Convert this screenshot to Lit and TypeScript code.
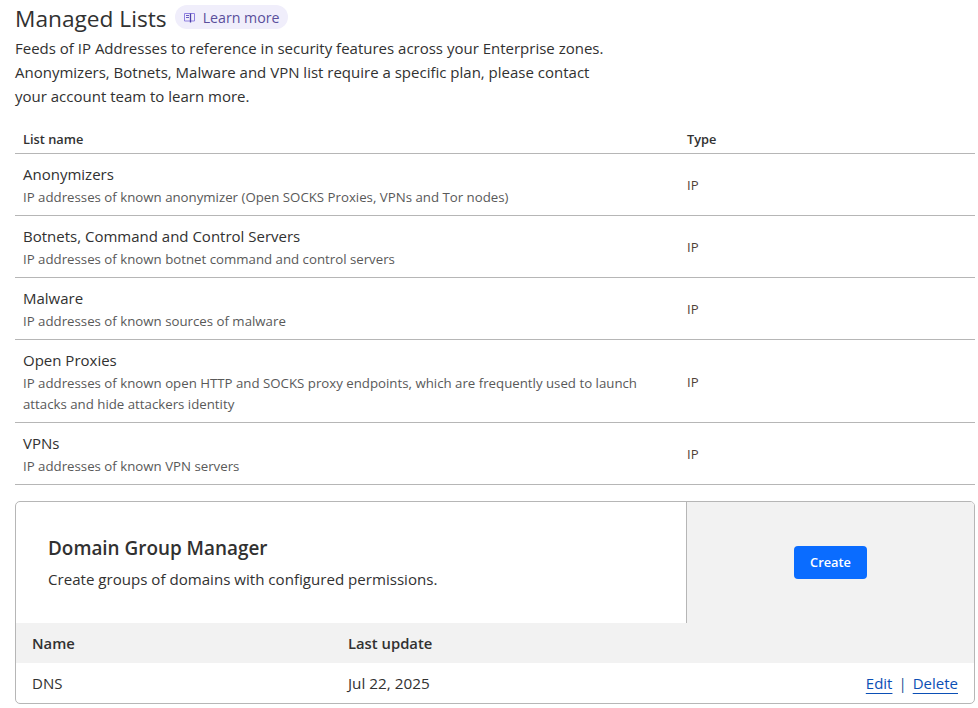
import { css, html, LitElement } from 'lit'
import { customElement } from 'lit/decorators.js'

const rows = [
  { name: 'Anonymizers', desc: 'IP addresses of known anonymizer (Open SOCKS Proxies, VPNs and Tor nodes)' },
  { name: 'Botnets, Command and Control Servers', desc: 'IP addresses of known botnet command and control servers' },
  { name: 'Malware', desc: 'IP addresses of known sources of malware' },
  {
    name: 'Open Proxies',
    desc: 'IP addresses of known open HTTP and SOCKS proxy endpoints, which are frequently used to launch attacks and hide attackers identity',
  },
  { name: 'VPNs', desc: 'IP addresses of known VPN servers' },
]

@customElement('app-root')
export class AppRoot extends LitElement {
  static styles = css`
    :host {
      display: block;
      width: 978px;
      height: 708px;
      overflow: hidden;
      background: #fff;
      color: #313131;
      font-family: 'Open Sans', 'Noto Sans', sans-serif;
      box-sizing: border-box;
      padding: 0 3px 0 15px;
    }
    .title-row {
      display: flex;
      align-items: flex-start;
      gap: 8px;
      height: 36px;
    }
    h1 {
      margin: 0;
      font-size: 22.7px;
      font-weight: 400;
      line-height: 38px;
      color: #313131;
    }
    .learn {
      display: inline-flex;
      align-items: center;
      gap: 8px;
      height: 24px;
      margin-top: 5px;
      padding: 0 8px 0 9px;
      border-radius: 12px;
      background: #f0eefb;
      color: #5a4f9c;
      font-size: 14.2px;
    }
    .intro {
      margin: 0;
      width: 610px;
      font-size: 15px;
      line-height: 24px;
    }
    .head,
    .row {
      display: grid;
      grid-template-columns: 664px 1fr;
      align-items: center;
      padding-left: 8px;
      border-bottom: 1px solid #b6b6b6;
      box-sizing: border-box;
    }
    .head {
      height: 30px;
      margin-top: 16px;
      font-size: 12.8px;
      font-weight: 600;
    }
    .row {
      padding-top: 8px;
      padding-bottom: 7px;
    }
    .name {
      font-size: 15px;
      line-height: 24px;
    }
    .desc {
      margin-top: 1px;
      font-size: 13.25px;
      line-height: 21px;
      color: #595959;
      width: 640px;
    }
    .type {
      font-size: 13.2px;
      color: #4f4238;
    }
    .card {
      margin-top: 16px;
      border: 1px solid #b6b6b6;
      border-radius: 5px;
      overflow: hidden;
    }
    .top {
      display: grid;
      grid-template-columns: 671px 1fr;
      height: 121px;
    }
    .info {
      display: flex;
      flex-direction: column;
      justify-content: center;
      padding: 0 0 2px 32px;
      border-right: 1px solid #b6b6b6;
    }
    h2 {
      margin: 0 0 6px;
      font-size: 18.9px;
      font-weight: 600;
      line-height: 28px;
    }
    .info p {
      margin: 0;
      font-size: 15.1px;
      line-height: 22px;
    }
    .action {
      display: flex;
      align-items: center;
      justify-content: center;
      background: #f2f2f2;
    }
    button {
      width: 73px;
      height: 33px;
      padding: 0 0 2px;
      border: none;
      border-radius: 4px;
      background: #0a6cff;
      color: #fff;
      font: 600 12.8px 'Open Sans', sans-serif;
    }
    .t-head,
    .t-row {
      display: grid;
      grid-template-columns: 316px 1fr auto;
      align-items: center;
      padding: 0 16px;
      font-size: 15px;
    }
    .t-head {
      height: 40px;
      background: #f2f2f2;
      font-size: 14.8px;
      font-weight: 600;
    }
    .t-row {
      height: 40px;
    }
    .date {
      font-size: 15.3px;
    }
    .links {
      display: flex;
      gap: 6px;
      font-size: 15px;
      color: #0b4fb5;
    }
    .links a {
      text-decoration: underline;
      text-underline-offset: 4px;
    }
    .sep {
      color: #1a4f96;
    }
  `

  render() {
    return html`
      <div class="title-row">
        <h1>Managed Lists</h1>
        <span class="learn">
          <svg width="11" height="11" viewBox="0 0 11 11" fill="none" stroke="#8f80e0" stroke-width="1">
            <path d="M.5 1.5h10v7.5H.5z" />
            <path d="M6.5 1.5v9" stroke="#4b3fa8" stroke-width="1.3" />
            <path d="M2 3.5h3M2 5.5h3" stroke="#6a5bc4" />
          </svg>
          Learn more
        </span>
      </div>
      <p class="intro">
        Feeds of IP Addresses to reference in security features across your Enterprise zones.
        Anonymizers, Botnets, Malware and VPN list require a specific plan, please contact your
        account team to learn more.
      </p>
      <div class="head"><span>List name</span><span>Type</span></div>
      ${rows.map(
        (r) => html`
          <div class="row">
            <div>
              <div class="name">${r.name}</div>
              <div class="desc">${r.desc}</div>
            </div>
            <span class="type">IP</span>
          </div>
        `,
      )}
      <div class="card">
        <div class="top">
          <div class="info">
            <h2>Domain Group Manager</h2>
            <p>Create groups of domains with configured permissions.</p>
          </div>
          <div class="action"><button>Create</button></div>
        </div>
        <div class="t-head"><span>Name</span><span>Last update</span><span></span></div>
        <div class="t-row">
          <span>DNS</span>
          <span class="date">Jul 22, 2025</span>
          <span class="links"><a>Edit</a><span class="sep">|</span><a>Delete</a></span>
        </div>
      </div>
    `
  }
}
